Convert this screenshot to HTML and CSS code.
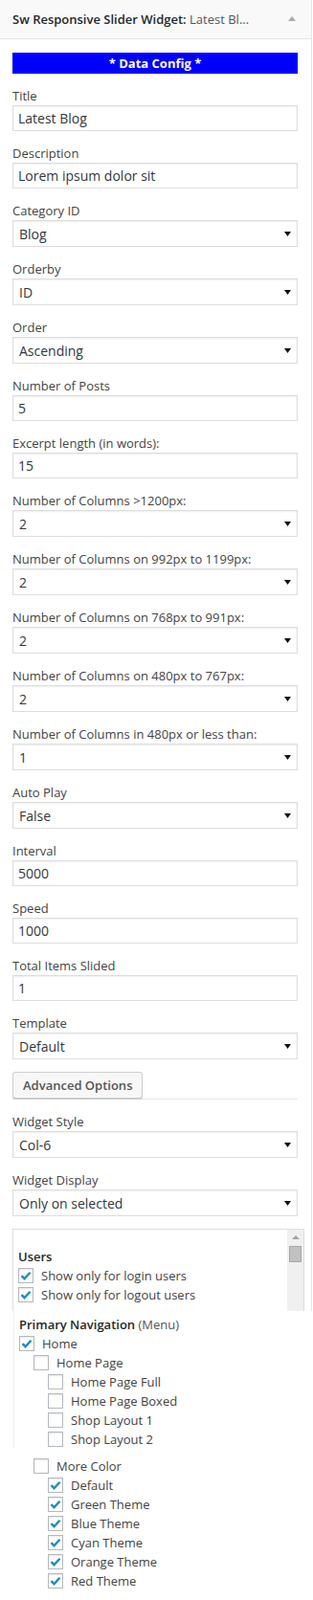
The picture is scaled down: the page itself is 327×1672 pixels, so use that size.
FILE: index.html
```html
<!DOCTYPE html>
<html lang="en">
<head>
  <meta charset="UTF-8" />
  <meta name="viewport" content="width=device-width, initial-scale=1.0"/>
  <title>Sw Responsive Slider Widget</title>
  <link rel="stylesheet" href="styles.css">
</head>
<body>
  <div class="widget">
    <div class="widget-top">
      <h3 class="widget-title">Sw Responsive Slider Widget: <span class="in-title">Latest Bl...</span></h3>
      <span class="toggle"></span>
    </div>

    <div class="widget-inside">
      <div class="section-head">* Data Config *</div>

      <div class="field">
        <label>Title</label>
        <input type="text" value="Latest Blog" />
      </div>
      <div class="field">
        <label>Description</label>
        <input type="text" value="Lorem ipsum dolor sit" />
      </div>
      <div class="field">
        <label>Category ID</label>
        <select><option>Blog</option></select>
      </div>
      <div class="field">
        <label>Orderby</label>
        <select><option>ID</option></select>
      </div>
      <div class="field">
        <label>Order</label>
        <select><option>Ascending</option></select>
      </div>
      <div class="field">
        <label>Number of Posts</label>
        <input type="text" value="5" />
      </div>
      <div class="field">
        <label>Excerpt length (in words):</label>
        <input type="text" value="15" />
      </div>
      <div class="field">
        <label>Number of Columns &gt;1200px:</label>
        <select><option>2</option></select>
      </div>
      <div class="field">
        <label>Number of Columns on 992px to 1199px:</label>
        <select><option>2</option></select>
      </div>
      <div class="field">
        <label>Number of Columns on 768px to 991px:</label>
        <select><option>2</option></select>
      </div>
      <div class="field">
        <label>Number of Columns on 480px to 767px:</label>
        <select><option>2</option></select>
      </div>
      <div class="field">
        <label>Number of Columns in 480px or less than:</label>
        <select><option>1</option></select>
      </div>
      <div class="field">
        <label>Auto Play</label>
        <select><option>False</option></select>
      </div>
      <div class="field">
        <label>Interval</label>
        <input type="text" value="5000" />
      </div>
      <div class="field">
        <label>Speed</label>
        <input type="text" value="1000" />
      </div>
      <div class="field">
        <label>Total Items Slided</label>
        <input type="text" value="1" />
      </div>
      <div class="field">
        <label>Template</label>
        <select><option>Default</option></select>
      </div>

      <div class="adv">
        <button type="button">Advanced Options</button>
      </div>

      <div class="field">
        <label>Widget Style</label>
        <select><option>Col-6</option></select>
      </div>
      <div class="field">
        <label>Widget Display</label>
        <select><option>Only on selected</option></select>
      </div>

      <div class="display-box">
        <div class="scrollbar"><span class="up"></span><span class="thumb"></span></div>

        <h4>Users</h4>
        <label class="check"><input type="checkbox" checked /> Show only for login users</label>
        <label class="check"><input type="checkbox" checked /> Show only for logout users</label>
      </div>
    </div>
  </div>

  <!-- rest of the display list, spilling out under the box -->
  <div class="spill">
    <div class="menu">
      <h4>Primary Navigation <span>(Menu)</span></h4>
      <label class="check"><input type="checkbox" checked /> Home</label>
      <div class="sub">
        <label class="check"><input type="checkbox" /> Home Page</label>
        <div class="sub">
          <label class="check"><input type="checkbox" /> Home Page Full</label>
          <label class="check"><input type="checkbox" /> Home Page Boxed</label>
          <label class="check"><input type="checkbox" /> Shop Layout 1</label>
          <label class="check"><input type="checkbox" /> Shop Layout 2</label>
        </div>
      </div>
    </div>

    <div class="more">
      <label class="check"><input type="checkbox" /> More Color</label>
      <div class="sub">
        <label class="check"><input type="checkbox" checked /> Default</label>
        <label class="check"><input type="checkbox" checked /> Green Theme</label>
        <label class="check"><input type="checkbox" checked /> Blue Theme</label>
        <label class="check"><input type="checkbox" checked /> Cyan Theme</label>
        <label class="check"><input type="checkbox" checked /> Orange Theme</label>
        <label class="check"><input type="checkbox" checked /> Red Theme</label>
      </div>
    </div>
  </div>
</body>
</html>
```

FILE: styles.css
```css
body {
  margin: 0;
  font-family: 'Open Sans', 'Liberation Sans', sans-serif;
  font-size: 13px;
  color: #444;
  background: #fff;
}

.widget {
  width: 326px;
  box-sizing: border-box;
  border-right: 1px solid #e5e5e5;
}

.widget-top {
  height: 41px;
  box-sizing: border-box;
  padding: 0 16px 0 13px;
  display: flex;
  align-items: center;
  justify-content: space-between;
  background: #f9f9f9;
  border-bottom: 1px solid #e5e5e5;
}

.widget-title {
  margin: 0;
  font-size: 13px;
  font-weight: 600;
  color: #23282d;
  white-space: nowrap;
}

.in-title {
  font-weight: 400;
  color: #555;
}

.toggle {
  width: 0;
  height: 0;
  border-left: 4px solid transparent;
  border-right: 4px solid transparent;
  border-bottom: 5px solid #aaa;
  margin-top: -1px;
}

.widget-inside {
  padding: 14px 14px 0 13px;
}

.section-head {
  height: 22px;
  line-height: 22px;
  margin-bottom: 13px;
  background: #0000ff;
  color: #fff;
  font-size: 13px;
  font-weight: 700;
  text-align: center;
}

.field {
  margin-bottom: 13px;
}

.field label {
  display: block;
  line-height: 20px;
  color: #444;
}

.field input,
.field select {
  display: block;
  width: 100%;
  box-sizing: border-box;
  margin: 0;
  border: 1px solid #ddd;
  border-radius: 0;
  box-shadow: inset 0 1px 2px rgba(0, 0, 0, 0.07);
  background-color: #fff;
  font-family: inherit;
  font-size: 14px;
  color: #32373c;
  outline: none;
}

.field input {
  height: 27px;
  padding: 0 5px;
}

.field select {
  height: 28px;
  padding: 0 20px 0 6px;
  appearance: none;
  -webkit-appearance: none;
  background-image: url("data:image/svg+xml,%3Csvg xmlns='http://www.w3.org/2000/svg' width='7' height='5'%3E%3Cpath d='M0 0h7L3.5 5z' fill='%23111'/%3E%3C/svg%3E");
  background-repeat: no-repeat;
  background-position: right 6px center;
}

.adv {
  border-bottom: 1px solid #e5e5e5;
  margin-bottom: 13px;
}

.adv button {
  display: block;
  height: 28px;
  padding: 0 10px;
  border: 1px solid #ccc;
  border-radius: 3px;
  background: #f7f7f7;
  box-shadow: 0 1px 0 #ccc;
  font-family: inherit;
  font-size: 13px;
  font-weight: 600;
  color: #555;
}

.display-box {
  position: relative;
  width: 305px;
  height: 86px;
  box-sizing: border-box;
  padding: 18px 0 0 5px;
  border: 1px solid #ddd;
  border-bottom: none;
}

.scrollbar {
  position: absolute;
  top: 0;
  right: 0;
  width: 17px;
  height: 85px;
  background: #f0f0f0;
}

.scrollbar .up {
  position: absolute;
  top: 6px;
  left: 5px;
  border-left: 4px solid transparent;
  border-right: 4px solid transparent;
  border-bottom: 4px solid #a3a3a3;
}

.scrollbar .thumb {
  position: absolute;
  top: 17px;
  left: 2px;
  width: 11px;
  height: 15px;
  background: #c1c1c1;
  border: 1px solid #a8a8a8;
}

h4 {
  margin: 0;
  line-height: 20px;
  font-size: 13px;
  font-weight: 600;
  color: #23282d;
}

h4 span {
  font-weight: 400;
  color: #555;
}

.check {
  display: flex;
  align-items: center;
  height: 20px;
  white-space: nowrap;
  color: #444;
}

.check input {
  appearance: none;
  -webkit-appearance: none;
  flex: none;
  width: 16px;
  height: 16px;
  margin: 0 8px 0 0;
  border: 1px solid #b4b9be;
  background: #fff;
  box-shadow: inset 0 1px 2px rgba(0, 0, 0, 0.1);
}

.check input:checked {
  background: #fff url("data:image/svg+xml,%3Csvg xmlns='http://www.w3.org/2000/svg' width='14' height='14'%3E%3Cpath d='M2.5 7.2l3 3 6-6.4' fill='none' stroke='%231e8cbe' stroke-width='2.4'/%3E%3C/svg%3E") no-repeat center;
}

.spill {
  padding-left: 14px;
}

.menu {
  padding: 4px 0 0 5px;
  border-left: 1px solid #eee;
}

.sub {
  padding-left: 15px;
}

.more {
  margin-top: 8px;
  padding-left: 21px;
}
```
